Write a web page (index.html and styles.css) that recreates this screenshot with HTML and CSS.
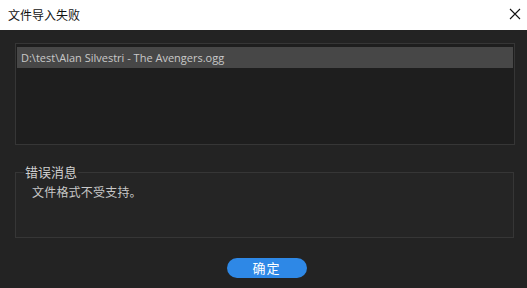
FILE: index.html
```html
<!DOCTYPE html>
<html lang="zh">
<head>
<meta charset="utf-8">
<title>文件导入失败</title>
<link rel="stylesheet" href="styles.css">
</head>
<body>
<div class="window">
  <div class="titlebar">
    <span class="title">文件导入失败</span>
    <span class="close">
      <svg width="12" height="12" viewBox="0 0 12 12"><path d="M1 1 L11 11 M11 1 L1 11" stroke="#111" stroke-width="1.1" fill="none"/></svg>
    </span>
  </div>
  <div class="content">
    <div class="list">
      <div class="row selected">D:\test\Alan Silvestri - The Avengers.ogg</div>
    </div>
    <fieldset class="errors">
      <legend>错误消息</legend>
      <div class="message">文件格式不受支持。</div>
    </fieldset>
    <div class="actions">
      <button class="ok">确定</button>
    </div>
  </div>
</div>
</body>
</html>
```
FILE: styles.css
```css
html, body {
  margin: 0;
  padding: 0;
}
body {
  width: 527px;
  height: 288px;
  overflow: hidden;
  background: #232323;
  font-family: "Noto Sans", "Noto Sans CJK SC", sans-serif;
}
.window {
  display: flex;
  flex-direction: column;
  height: 288px;
}
.titlebar {
  height: 30px;
  background: #ffffff;
  display: flex;
  align-items: center;
  justify-content: space-between;
  padding: 0 6px 0 8px;
  box-sizing: border-box;
}
.title {
  font-family: "Noto Sans CJK SC", sans-serif;
  font-size: 12px;
  color: #111;
  line-height: 1;
  margin-top: -1px;
}
.close {
  display: flex;
  width: 12px;
  height: 12px;
  margin-top: -2px;
}
.content {
  flex: 1;
  display: flex;
  flex-direction: column;
  padding: 13px 12px 0 15px;
}
.list {
  height: 94px;
  background: #1e1e1e;
  border: 1px solid #363636;
  padding: 3px 1px;
  box-sizing: content-box;
}
.row {
  height: 21px;
  line-height: 21px;
  padding-left: 4px;
  font-family: "Open Sans", sans-serif;
  font-size: 11px;
  color: #c9c9c9;
}
.row.selected {
  background: #474747;
}
.errors {
  margin: 20px 1px 0 0;
  padding: 0 0 0 16px;
  height: 73px;
  box-sizing: border-box;
  border: 1px solid #363636;
  background: #252525;
}
.errors legend {
  font-family: "Noto Sans CJK SC", sans-serif;
  font-size: 13px;
  color: #cfcfcf;
  padding: 0 1px;
  margin-left: -8px;
  line-height: 14px;
}
.message {
  font-family: "Noto Sans CJK SC", sans-serif;
  font-size: 12px;
  color: #c8c8c8;
  line-height: 14px;
  margin-top: 6px;
  letter-spacing: 0.2px;
}
.actions {
  display: flex;
  justify-content: center;
  padding: 20px 0 0 3px;
}
.ok {
  width: 80px;
  height: 20px;
  border: none;
  border-radius: 10px;
  background: #2e88e6;
  color: #ffffff;
  font-family: "Noto Sans CJK SC", sans-serif;
  font-size: 13px;
  line-height: 20px;
  padding: 0;
  letter-spacing: 1px;
}
```
